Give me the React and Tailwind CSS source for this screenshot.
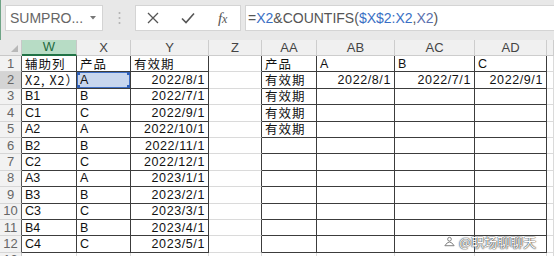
import React from 'react';

const COLS = ['W', 'X', 'Y', 'Z', 'AA', 'AB', 'AC', 'AD', ''];

const ROWS = [
  ['辅助列', '产品', '有效期', '', '产品', 'A', 'B', 'C', ''],
  ['X2, X2）', 'A', '2022/8/1', '', '有效期', '2022/8/1', '2022/7/1', '2022/9/1', ''],
  ['B1', 'B', '2022/7/1', '', '有效期', '', '', '', ''],
  ['C1', 'C', '2022/9/1', '', '有效期', '', '', '', ''],
  ['A2', 'A', '2022/10/1', '', '有效期', '', '', '', ''],
  ['B2', 'B', '2022/11/1', '', '', '', '', '', ''],
  ['C2', 'C', '2022/12/1', '', '', '', '', '', ''],
  ['A3', 'A', '2023/1/1', '', '', '', '', '', ''],
  ['B3', 'B', '2023/2/1', '', '', '', '', '', ''],
  ['C3', 'C', '2023/3/1', '', '', '', '', '', ''],
  ['B4', 'B', '2023/4/1', '', '', '', '', '', ''],
  ['C4', 'C', '2023/5/1', '', '', '', '', '', ''],
];

const isDate = (s) => /^\d{4}\//.test(s);

const FormulaBar = () => (
  <div className="h-[36px] flex items-start pt-[5px]">
    {/* name box */}
    <div className="ml-[5px] w-[98px] h-[26px] bg-white border border-[#d4d4d4] flex items-center pl-[4px] text-[14px] text-[#666]">
      <span>SUMPRO...</span>
      <svg width="6" height="4" viewBox="0 0 6 4" className="ml-auto mr-[6px]">
        <path d="M0 0 L6 0 L3 3.5 Z" fill="#777" />
      </svg>
    </div>
    <div className="w-[32px] h-[26px] flex items-center justify-center">
      <svg width="3" height="14" viewBox="0 0 3 14">
        <circle cx="1.5" cy="2" r="1" fill="#b0b0b0" />
        <circle cx="1.5" cy="7" r="1" fill="#b0b0b0" />
        <circle cx="1.5" cy="12" r="1" fill="#b0b0b0" />
      </svg>
    </div>
    {/* cancel / enter / fx */}
    <div className="w-[106px] h-[26px] bg-white border border-[#d4d4d4] flex items-center">
      <div className="w-[35px] flex justify-center">
        <svg width="12" height="12" viewBox="0 0 12 12">
          <path d="M1 1 L11 11 M11 1 L1 11" stroke="#555" strokeWidth="1.3" />
        </svg>
      </div>
      <div className="w-[35px] flex justify-center">
        <svg width="14" height="12" viewBox="0 0 14 12">
          <path d="M1 6.5 L5 10.5 L13 1.5" stroke="#555" strokeWidth="1.6" fill="none" />
        </svg>
      </div>
      <div className="w-[35px] flex justify-center font-['Liberation_Serif',serif] italic text-[15px] text-[#555] leading-none">
        <span>f<span className="text-[12px]">x</span></span>
      </div>
    </div>
    {/* formula */}
    <div className="ml-[4px] flex-1 h-[26px] bg-white border border-r-0 border-[#d4d4d4] flex items-center pl-[2px] text-[14px] text-[#555]">
      <span>=</span>
      <span className="text-[#3a6fc4]">X2</span>
      <span>&amp;COUNTIFS(</span>
      <span className="text-[#3a6fc4]">$X$2:X2</span>
      <span>,</span>
      <span className="text-[#5a6fae]">X2</span>
      <span>)</span>
    </div>
  </div>
);

const HeaderRow = () => (
  <>
    <div className="bg-[#e9e9e9] border-r border-b border-[#c8c8c8] flex items-end justify-end pr-[3px] pb-[3px]">
      <svg width="7" height="7" viewBox="0 0 7 7">
        <path d="M7 0 L7 7 L0 7 Z" fill="#b8b8b8" />
      </svg>
    </div>
    {COLS.map((c, i) =>
      c === 'W' ? (
        <div key={i} className="bg-[#b7dcc5] border-r border-r-[#c8c8c8] border-b-2 border-b-[#217346] flex items-center justify-center text-[13px] text-[#1e6b40]">
          {c}
        </div>
      ) : (
        <div key={i} className="bg-[#f0f0f0] border-r border-b border-[#cdcdcd] flex items-center justify-center text-[13px] text-[#444]">
          {c}
        </div>
      )
    )}
  </>
);

const Cell = ({ r, c, v }) => {
  const inTable = c <= 2 || (c >= 4 && c <= 7);
  const rightDark = r < 12 && c <= 7;
  const bottomDark = r < 12 && inTable;
  const date = isDate(v);
  const cjk = /[\u4e00-\u9fff\uff09]/.test(v);
  const active = r === 1 && c === 1;
  const editing = r === 1 && c === 0;
  return (
    <div
      className={`relative flex items-center whitespace-nowrap px-[3px] border-r border-b
        ${editing ? 'overflow-hidden' : ''}
        ${rightDark ? 'border-r-[#3c3c3c]' : 'border-r-[#dadada]'}
        ${bottomDark ? 'border-b-[#3c3c3c]' : 'border-b-[#dadada]'}
        ${active ? 'bg-[#c8d6ee]' : 'bg-white'}
        ${date ? 'justify-end tracking-[0.6px] text-[12.5px]' : ''}
        ${cjk ? "font-['Noto_Sans_CJK_SC',sans-serif] text-[12.5px] tracking-[1px] leading-[14px]" : 'text-[12.5px] leading-[14px]'}
        text-[#111]`}
    >
      {v}
      {active && (
        <>
          <div className="absolute inset-0 border border-[#3f6fc6]" />
          <div className="absolute left-0 top-0 w-[3px] h-[3px] bg-[#2f5fb8]" />
          <div className="absolute right-0 top-0 w-[3px] h-[3px] bg-[#2f5fb8]" />
          <div className="absolute left-0 bottom-0 w-[3px] h-[3px] bg-[#2f5fb8]" />
          <div className="absolute right-0 bottom-0 w-[3px] h-[3px] bg-[#2f5fb8]" />
        </>
      )}
    </div>
  );
};

const Sheet = () => (
  <div className="grid h-[216px] grid-cols-[22px_55px_54px_78px_53px_55px_78px_80px_72px_7px] grid-rows-[16px_repeat(12,16.4px)_1fr]">
    <HeaderRow />
    {[...ROWS, Array(9).fill('')].map((row, r) => (
      <React.Fragment key={r}>
        <div
          className={`flex items-center justify-center text-[13px] text-[#666] leading-[14px] border-b border-b-[#d6d6d6] border-r
            ${r < 12 ? 'border-r-[#555]' : 'border-r-[#c8c8c8]'}
            ${r === 1 ? 'bg-[#d4d4d4]' : 'bg-[#f2f2f2]'}`}
        >
          {r + 1}
        </div>
        {row.map((v, c) => (
          <Cell key={c} r={r} c={c} v={v} />
        ))}
      </React.Fragment>
    ))}
  </div>
);

const Watermark = () => (
  <div className="absolute left-[443px] top-[235px] flex items-center gap-[3px] text-white text-[13px] leading-none font-['Noto_Sans_CJK_SC',sans-serif] [text-shadow:0_0_1px_#444,0_0_1px_#444,0_0_2px_#777]">
    <svg width="13" height="12" viewBox="0 0 14 12">
      <path d="M2 10 Q7 2 12 10 Z" fill="#fff" stroke="#777" strokeWidth="1" />
      <circle cx="7" cy="3" r="2" fill="#fff" stroke="#777" strokeWidth="1" />
    </svg>
    <span>@职场聊聊天</span>
  </div>
);

export default function App() {
  return (
    <div className="relative w-[554px] h-[256px] overflow-hidden bg-[#e8e8e8] shadow-[inset_1px_0_0_#6fa486] font-['Liberation_Sans','Noto_Sans_CJK_SC',sans-serif]">
      <FormulaBar />
      <div className="h-[4px]" />
      <Sheet />
      <Watermark />
    </div>
  );
}
